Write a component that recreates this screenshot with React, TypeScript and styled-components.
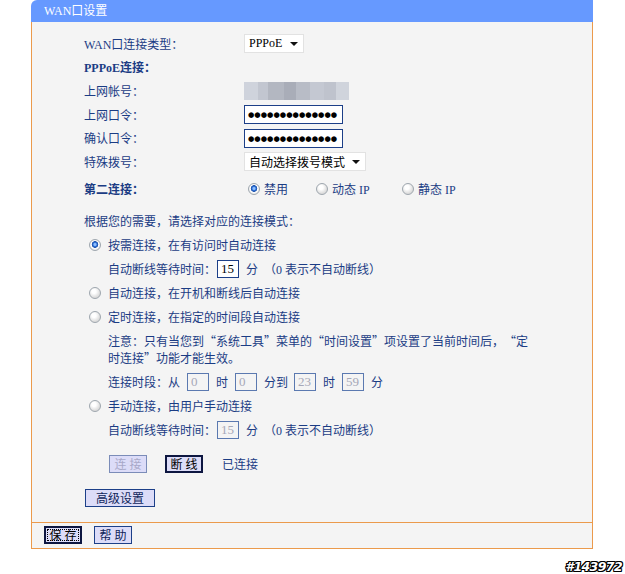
import styled, { createGlobalStyle } from 'styled-components';

const GlobalStyle = createGlobalStyle`
  html, body {
    margin: 0;
    padding: 0;
    background: #ffffff;
  }
  body {
    font-family: "Liberation Serif", "Noto Sans CJK SC", serif;
    font-size: 12px;
    color: #1b3c84;
    text-spacing-trim: space-all;
  }
`;

const Page = styled.div`
  width: 625px;
  height: 574px;
  overflow: hidden;
`;

const Panel = styled.div`
  margin-left: 31px;
  width: 562px;
`;

const Header = styled.div`
  height: 22px;
  background: #6699ff;
  border-top-left-radius: 6px;
  color: #ffffff;
  line-height: 22px;
  padding-left: 13px;
`;

const Body = styled.div`
  background: #f4f4f4;
  border-left: 1px solid #eb9a4c;
  border-right: 1px solid #eb9a4c;
  padding: 10px 0 12px 52px;
`;

const Footer = styled.div`
  background: #f4f4f4;
  border: 1px solid #eb9a4c;
  height: 25px;
  display: flex;
  align-items: center;
  gap: 12px;
  padding-left: 12px;
`;

const FieldRow = styled.div<{ $h?: number; $top?: number }>`
  display: flex;
  align-items: center;
  height: ${(p) => p.$h ?? 24}px;
  margin-top: ${(p) => p.$top ?? 0}px;
  white-space: nowrap;
`;

const Label = styled.div<{ $bold?: boolean }>`
  width: 160px;
  flex: none;
  font-weight: ${(p) => (p.$bold ? 'bold' : 'normal')};
`;

const SelectBox = styled.div<{ $w: number }>`
  width: ${(p) => p.$w}px;
  height: 19px;
  box-sizing: border-box;
  background: #ffffff;
  border: 1px solid #e2e2e2;
  color: #000000;
  display: flex;
  align-items: center;
  justify-content: space-between;
  padding: 0 5px 0 4px;
`;

const Arrow = styled.span`
  width: 0;
  height: 0;
  border-left: 4px solid transparent;
  border-right: 4px solid transparent;
  border-top: 4px solid #111111;
  margin-top: 1px;
`;

const Blurred = styled.div`
  width: 105px;
  height: 18px;
  background: linear-gradient(
    90deg,
    #cfd3dc 0 14px,
    #c2c6d0 14px 24px,
    #b3b7c1 24px 40px,
    #a9adb8 40px 52px,
    #b8bcc6 52px 66px,
    #c4c8d2 66px 80px,
    #bfc3cd 80px 92px,
    #d0d4dc 92px
  );
`;

const PasswordBox = styled.div`
  width: 99px;
  height: 19px;
  box-sizing: border-box;
  background: #ffffff;
  border: 1px solid #1c3f88;
  color: #000000;
  font-family: "DejaVu Sans", sans-serif;
  font-size: 7.3px;
  line-height: 17px;
  padding-left: 3px;
  white-space: nowrap;
`;

const RadioGroup = styled.div`
  display: flex;
  align-items: center;
  padding-left: 4px;
`;

const RadioOption = styled.label<{ $w?: number }>`
  display: flex;
  align-items: center;
  gap: 4px;
  width: ${(p) => (p.$w ? `${p.$w}px` : 'auto')};
`;

const Radio = styled.span<{ $checked?: boolean }>`
  width: 12px;
  height: 12px;
  flex: none;
  box-sizing: border-box;
  border-radius: 50%;
  border: 1px solid #9ea6ae;
  background: ${(p) =>
    p.$checked
      ? 'radial-gradient(circle at 50% 45%, #8fc0ff 0 1px, #2d6fd6 2px, #1a4fa8 3px, #ffffff 3.6px, #e4e4e4 6px)'
      : 'radial-gradient(circle at 40% 35%, #ffffff 0 2px, #dcdcdc 6px)'};
`;

const Text = styled.div`
  white-space: nowrap;
`;

const ModeRow = styled.label`
  display: flex;
  align-items: center;
  gap: 7px;
  height: 24px;
  padding-left: 5px;
  white-space: nowrap;
`;

const SubRow = styled.div<{ $top?: number }>`
  display: flex;
  align-items: center;
  height: 24px;
  padding-left: 24px;
  margin-top: ${(p) => p.$top ?? 0}px;
  white-space: nowrap;
`;

const Note = styled.div`
  padding-left: 24px;
  margin-top: 3.5px;
  line-height: 17px;
  white-space: nowrap;
  font-family: "Noto Sans CJK SC", sans-serif;
`;

const SmallInput = styled.span<{ $disabled?: boolean }>`
  display: inline-flex;
  align-items: center;
  width: 22px;
  height: 18px;
  box-sizing: border-box;
  border: 1px solid ${(p) => (p.$disabled ? '#5b79b0' : '#1c3f88')};
  background: ${(p) => (p.$disabled ? '#f4f4f4' : '#ffffff')};
  color: ${(p) => (p.$disabled ? '#a6a8b8' : '#000000')};
  padding-left: 3px;
  font-family: "Liberation Serif", serif;
  font-size: 13px;
  margin: 0 7px 0 1px;
`;

const Gap = styled.span<{ $w: number }>`
  display: inline-block;
  width: ${(p) => p.$w}px;
`;

const ButtonRow = styled.div<{ $left: number; $top: number }>`
  display: flex;
  align-items: center;
  gap: 18px;
  height: 24px;
  padding-left: ${(p) => p.$left}px;
  margin-top: ${(p) => p.$top}px;
`;

const Button = styled.button<{ $kind?: 'normal' | 'default' | 'disabled'; $w: number }>`
  width: ${(p) => p.$w}px;
  height: 18px;
  box-sizing: border-box;
  padding: 0;
  background: #dcdcf8;
  font-family: "Noto Sans CJK SC", sans-serif;
  font-size: 12px;
  line-height: 14px;
  letter-spacing: ${(p) => (p.$w < 50 ? '3px' : '0')};
  text-indent: ${(p) => (p.$w < 50 ? '3px' : '0')};
  color: ${(p) => (p.$kind === 'disabled' ? '#a8a8c8' : p.$kind === 'default' ? '#000000' : '#10255a')};
  border: ${(p) =>
    p.$kind === 'default'
      ? '2px solid #0d1640'
      : p.$kind === 'disabled'
      ? '1px solid #7b8cb8'
      : '1px solid #1c3f88'};
  cursor: default;
`;

const FocusButton = styled(Button)`
  outline: 1px dotted #000000;
  outline-offset: -4px;
`;

const Status = styled.span`
  margin-left: 1px;
`;

const Watermark = styled.div`
  text-align: right;
  padding: 11px 3px 0 0;
  font-family: "DejaVu Sans", sans-serif;
  font-weight: bold;
  font-style: italic;
  font-size: 12.5px;
  line-height: 13px;
  letter-spacing: -0.6px;
  color: #ffffff;
  text-shadow: -1px 0 #000, 1px 0 #000, 0 -1px #000, 0 1px #000, 1px 1px #000, -1px -1px #000,
    1px -1px #000, -1px 1px #000;
`;

export default function App() {
  return (
    <Page>
      <GlobalStyle />
      <Panel>
        <Header>WAN口设置</Header>
        <Body>
          <FieldRow $h={23.6}>
            <Label>WAN口连接类型：</Label>
            <SelectBox $w={60}>
              <span>PPPoE</span>
              <Arrow />
            </SelectBox>
          </FieldRow>
          <FieldRow $h={23.6}>
            <Label $bold>PPPoE连接：</Label>
          </FieldRow>
          <FieldRow $h={23.6}>
            <Label>上网帐号：</Label>
            <Blurred />
          </FieldRow>
          <FieldRow $h={23.6}>
            <Label>上网口令：</Label>
            <PasswordBox>●●●●●●●●●●●●●●</PasswordBox>
          </FieldRow>
          <FieldRow $h={23.6}>
            <Label>确认口令：</Label>
            <PasswordBox>●●●●●●●●●●●●●●</PasswordBox>
          </FieldRow>
          <FieldRow $h={23.6}>
            <Label>特殊拨号：</Label>
            <SelectBox $w={122}>
              <span>自动选择拨号模式</span>
              <Arrow />
            </SelectBox>
          </FieldRow>
          <FieldRow $h={30}>
            <Label $bold>第二连接：</Label>
            <RadioGroup>
              <RadioOption $w={68}>
                <Radio $checked />
                禁用
              </RadioOption>
              <RadioOption $w={86}>
                <Radio />
                动态 IP
              </RadioOption>
              <RadioOption>
                <Radio />
                静态 IP
              </RadioOption>
            </RadioGroup>
          </FieldRow>

          <FieldRow $top={5.4}>
            <Text>根据您的需要，请选择对应的连接模式：</Text>
          </FieldRow>
          <ModeRow>
            <Radio $checked />
            按需连接，在有访问时自动连接
          </ModeRow>
          <SubRow>
            自动断线等待时间：<SmallInput>15</SmallInput>分<Gap $w={6} />（0 表示不自动断线）
          </SubRow>
          <ModeRow>
            <Radio />
            自动连接，在开机和断线后自动连接
          </ModeRow>
          <ModeRow>
            <Radio />
            定时连接，在指定的时间段自动连接
          </ModeRow>
          <Note>
            注意：只有当您到“系统工具”菜单的“时间设置”项设置了当前时间后，“定
            <br />
            时连接”功能才能生效。
          </Note>
          <SubRow $top={3.5}>
            连接时段：从<Gap $w={6} />
            <SmallInput $disabled>0</SmallInput>时<Gap $w={6} />
            <SmallInput $disabled>0</SmallInput>分到<Gap $w={5} />
            <SmallInput $disabled>23</SmallInput>时<Gap $w={6} />
            <SmallInput $disabled>59</SmallInput>分
          </SubRow>
          <ModeRow>
            <Radio />
            手动连接，由用户手动连接
          </ModeRow>
          <SubRow>
            自动断线等待时间：<SmallInput $disabled>15</SmallInput>分<Gap $w={6} />（0 表示不自动断线）
          </SubRow>

          <ButtonRow $left={25} $top={10}>
            <Button $kind="disabled" $w={38} disabled>
              连接
            </Button>
            <Button $kind="default" $w={38}>
              断线
            </Button>
            <Status>已连接</Status>
          </ButtonRow>
          <ButtonRow $left={1} $top={10}>
            <Button $w={70}>高级设置</Button>
          </ButtonRow>
        </Body>
        <Footer>
          <FocusButton $kind="default" $w={38}>
            保存
          </FocusButton>
          <Button $w={38}>帮助</Button>
        </Footer>
      </Panel>
      <Watermark>#143972</Watermark>
    </Page>
  );
}
